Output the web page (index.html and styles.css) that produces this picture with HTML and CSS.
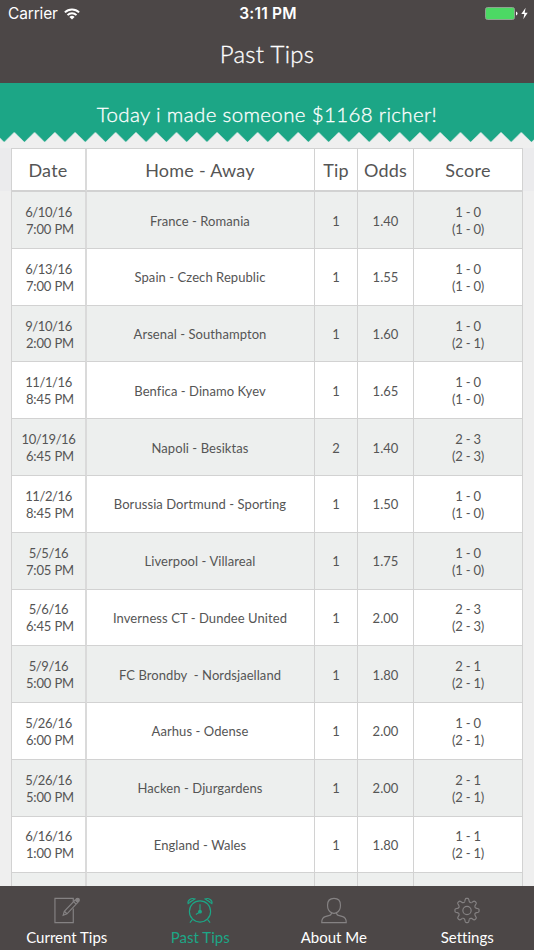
FILE: index.html
```html
<!DOCTYPE html>
<html lang="en">
<head>
  <meta charset="UTF-8">
  <title>Past Tips</title>
  <link rel="stylesheet" href="styles.css">
</head>
<body>

  <header>
    <div class="status">
      <div class="carrier">
        <span>Carrier</span>
        <svg width="16" height="12" viewBox="0 0 16 12" fill="none" stroke="#fff" stroke-width="2">
          <path d="M.9 4.4a10 10 0 0 1 14.2 0M3.5 7.1a6.4 6.4 0 0 1 9 0"/>
          <path d="M8 11.6 5.4 9a3.7 3.7 0 0 1 5.2 0z" fill="#fff" stroke="none"/>
        </svg>
      </div>
      <div class="time">3:11 PM</div>
      <div class="battery">
        <svg width="43" height="13" viewBox="0 0 43 13">
          <rect x=".5" y=".5" width="29" height="12" rx="2" fill="#4cd964" stroke="#8fa391"/>
          <path d="M31 4.5q1.5.4 1.5 2t-1.5 2z" fill="#fff"/>
          <path d="M40.6.7 36.3 7h3l-1 5.3 4.4-6.5h-3z" fill="#fff"/>
        </svg>
      </div>
    </div>
    <h1>Past Tips</h1>
  </header>

  <div class="banner">
    <p>Today i made someone $1168 richer!</p>
    <svg class="zigzag" width="534" height="10">
      <defs>
        <pattern id="teeth" x="14.3" width="20.28" height="10" patternUnits="userSpaceOnUse">
          <path d="M0 0 10.14 10 20.28 0z" fill="#1ca686"/>
        </pattern>
      </defs>
      <rect width="534" height="10" fill="url(#teeth)"/>
    </svg>
  </div>

  <!-- Tips table -->
  <main>
    <div class="tips">
      <div class="row head"><div>Date</div><div>Home - Away</div><div>Tip</div><div>Odds</div><div>Score</div></div>
      <div class="row"><div class="date">6/10/16<span>7:00 PM</span></div><div>France - Romania</div><div>1</div><div>1.40</div><div class="score">1 - 0<br>(1 - 0)</div></div>
      <div class="row"><div class="date">6/13/16<span>7:00 PM</span></div><div>Spain - Czech Republic</div><div>1</div><div>1.55</div><div class="score">1 - 0<br>(1 - 0)</div></div>
      <div class="row"><div class="date">9/10/16<span>2:00 PM</span></div><div>Arsenal - Southampton</div><div>1</div><div>1.60</div><div class="score">1 - 0<br>(2 - 1)</div></div>
      <div class="row"><div class="date">11/1/16<span>8:45 PM</span></div><div>Benfica - Dinamo Kyev</div><div>1</div><div>1.65</div><div class="score">1 - 0<br>(1 - 0)</div></div>
      <div class="row"><div class="date">10/19/16<span>6:45 PM</span></div><div>Napoli - Besiktas</div><div>2</div><div>1.40</div><div class="score">2 - 3<br>(2 - 3)</div></div>
      <div class="row"><div class="date">11/2/16<span>8:45 PM</span></div><div>Borussia Dortmund - Sporting</div><div>1</div><div>1.50</div><div class="score">1 - 0<br>(1 - 0)</div></div>
      <div class="row"><div class="date">5/5/16<span>7:05 PM</span></div><div>Liverpool - Villareal</div><div>1</div><div>1.75</div><div class="score">1 - 0<br>(1 - 0)</div></div>
      <div class="row"><div class="date">5/6/16<span>6:45 PM</span></div><div>Inverness CT - Dundee United</div><div>1</div><div>2.00</div><div class="score">2 - 3<br>(2 - 3)</div></div>
      <div class="row"><div class="date">5/9/16<span>5:00 PM</span></div><div>FC Brondby&nbsp; - Nordsjaelland</div><div>1</div><div>1.80</div><div class="score">2 - 1<br>(2 - 1)</div></div>
      <div class="row"><div class="date">5/26/16<span>6:00 PM</span></div><div>Aarhus - Odense</div><div>1</div><div>2.00</div><div class="score">1 - 0<br>(2 - 1)</div></div>
      <div class="row"><div class="date">5/26/16<span>5:00 PM</span></div><div>Hacken - Djurgardens</div><div>1</div><div>2.00</div><div class="score">2 - 1<br>(2 - 1)</div></div>
      <div class="row"><div class="date">6/16/16<span>1:00 PM</span></div><div>England - Wales</div><div>1</div><div>1.80</div><div class="score">1 - 1<br>(2 - 1)</div></div>
      <div class="row"><div class="date"></div><div></div><div></div><div></div><div></div></div>
    </div>
  </main>

  <!-- Tab bar -->
  <nav>
    <a class="tab">
      <svg width="28" height="28" viewBox="0 0 28 28">
        <path d="M20.5 5V1.5h-19v25h19V12"/>
        <path d="m10 19 1.2-4.2L22.6 2.9l2.7 2.6L14 17.4zM20.8 4.8l2.7 2.6M11.2 14.8l2.8 2.6"/>
        <circle cx="25" cy="3.2" r="1.8" fill="#858283"/>
      </svg>
      <span>Current Tips</span>
    </a>
    <a class="tab active">
      <svg width="28" height="28" viewBox="0 0 28 28">
        <circle cx="14" cy="15" r="11"/>
        <path d="M1.7 6.9C.6 3.2 5 .5 8.8 2zM26.3 6.9C27.4 3.2 23 .5 19.2 2zM3.1 5.5 7.2 3.2M24.9 5.5l-4.1-2.3M6.3 23.3l-2.8 3.3M21.7 23.3l2.8 3.3M14 7.5v8l-4.3 2.7"/>
        <circle cx="14" cy="15.2" r="1.4" fill="#1ca686"/>
      </svg>
      <span>Past Tips</span>
    </a>
    <a class="tab">
      <svg width="28" height="28" viewBox="0 0 28 28">
        <path d="M11.3 16.2C8.5 14.8 7.3 11.6 7.3 8.5c0-4.5 2.8-7 6.7-7s6.7 2.5 6.7 7c0 3.1-1.2 6.3-4 7.7-.3 1.6.5 2.4 1.9 2.9l4.5 1.3c2.7.8 3.6 2.4 3.6 6.1H1.3c0-3.7.9-5.3 3.6-6.1l4.5-1.3c1.4-.5 2.2-1.3 1.9-2.9q2.7 1.4 5.4 0"/>
      </svg>
      <span>About Me</span>
    </a>
    <a class="tab">
      <svg width="28" height="28" viewBox="-14 -14 28 28">
        <defs>
          <path id="tooth" d="M-2.4-9.2-1.8-11.6Q-1.5-12.5-.7-12.5H.7Q1.5-12.5 1.8-11.6L2.4-9.2Q3.4-7.7 4.8-8.2"/>
        </defs>
        <circle r="4.3"/>
        <use href="#tooth"/>
        <use href="#tooth" transform="rotate(45)"/>
        <use href="#tooth" transform="rotate(90)"/>
        <use href="#tooth" transform="rotate(135)"/>
        <use href="#tooth" transform="rotate(180)"/>
        <use href="#tooth" transform="rotate(225)"/>
        <use href="#tooth" transform="rotate(270)"/>
        <use href="#tooth" transform="rotate(315)"/>
      </svg>
      <span>Settings</span>
    </a>
  </nav>

</body>
</html>
```
FILE: styles.css
```css
* {
  box-sizing: border-box;
}
body {
  margin: 0;
  height: 950px;
  display: flex;
  flex-direction: column;
  overflow: hidden;
  background: #efefef;
  color: #555;
  font-family: Lato, sans-serif;
  font-variant-ligatures: none;
}

/* Header */
header {
  height: 83px;
  flex: none;
  background: #4c4747;
  color: #fff;
}
.status {
  display: grid;
  grid-template-columns: 1fr auto 1fr;
  align-items: center;
  height: 27px;
  padding: 0 6px 0 8px;
  font-family: Inter, sans-serif;
  font-size: 15.5px;
}
.carrier {
  display: flex;
  align-items: center;
  gap: 6px;
  letter-spacing: -0.15px;
}
.time {
  font-weight: 600;
  letter-spacing: 0.2px;
}
.battery {
  display: flex;
  justify-content: flex-end;
}
h1 {
  margin: 0;
  text-align: center;
  font-size: 24px;
  font-weight: 300;
  line-height: 54px;
  letter-spacing: 0.3px;
  -webkit-text-stroke: 0.3px #fff;
}

/* Green banner */
.banner {
  flex: none;
  height: 59px;
}
.banner p {
  margin: 0;
  height: 49px;
  padding-top: 6px;
  line-height: 50px;
  background: #1ca686;
  color: #fff;
  text-align: center;
  font-size: 20.5px;
  font-weight: 300;
  letter-spacing: 0.35px;
  -webkit-text-stroke: 0.3px #fff;
}
.zigzag {
  display: block;
}

/* Table */
main {
  flex: 1;
  min-height: 0;
  overflow: hidden;
  padding: 6px 11px 0;
  background: linear-gradient(#ebebed, #ebebed) 0 6px / 100% 43px no-repeat;
}
.tips {
  border-top: 1px solid #d2d2d2;
  border-left: 1px solid #d2d2d2;
}
.row {
  display: grid;
  grid-template-columns: 75px 228px 43px 56px 109px;
  height: 56.78px;
  font-size: 13px;
  line-height: 17px;
  letter-spacing: 0.07px;
}
.row > div {
  display: flex;
  align-items: center;
  justify-content: center;
  padding-top: 2px;
  text-align: center;
  background: #fff;
  border-right: 1px solid #d2d2d2;
  border-bottom: 1px solid #d2d2d2;
}
.row > div:first-child {
  border-right: 2px solid #dadada;
}
.row > div:nth-child(2) {
  padding-right: 1px;
}
.row:nth-child(even) > div {
  background: #edefee;
}
.row > .date {
  flex-direction: column;
  letter-spacing: -0.4px;
}
.date span {
  padding-left: 3px;
  letter-spacing: -0.15px;
}
.row > .score {
  letter-spacing: -0.2px;
}
.row.head {
  height: 43.2px;
  font-size: 18px;
  letter-spacing: 0.25px;
}
.row.head > div {
  padding-top: 2px;
  border-bottom-width: 2px;
}
.row.head > div:first-child {
  padding-right: 1px;
}

/* Tab bar */
nav {
  flex: none;
  display: flex;
  height: 64px;
  background: #4c4747;
  color: #fff;
}
.tab {
  flex: 1;
  display: flex;
  flex-direction: column;
  align-items: center;
  padding-top: 11px;
  font-size: 15px;
  line-height: 26px;
}
.tab svg {
  fill: none;
  stroke: #858283;
  stroke-width: 1.2;
}
.tab.active {
  color: #1ca686;
}
.tab.active svg {
  stroke: #1ca686;
}
```
